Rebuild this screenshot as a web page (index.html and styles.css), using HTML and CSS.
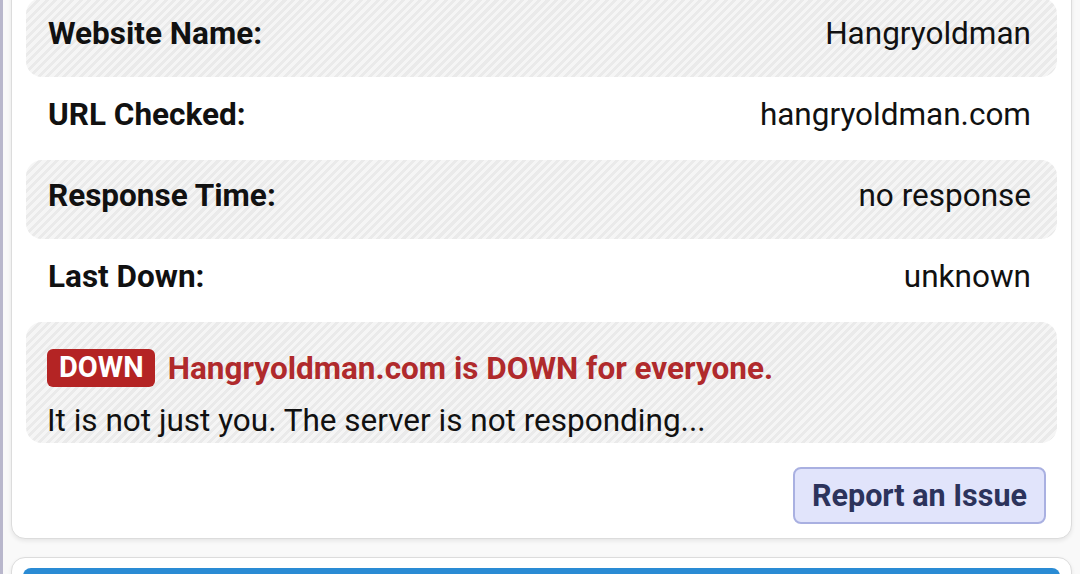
FILE: index.html
```html
<!DOCTYPE html>
<html lang="en">
<head>
<meta charset="utf-8">
<title>Hangryoldman status</title>
<link rel="stylesheet" href="styles.css">
</head>
<body>
<div class="page">
  <section class="card">
    <div class="row striped">
      <span class="label">Website Name:</span>
      <span class="value">Hangryoldman</span>
    </div>
    <div class="row">
      <span class="label">URL Checked:</span>
      <span class="value">hangryoldman.com</span>
    </div>
    <div class="row striped">
      <span class="label">Response Time:</span>
      <span class="value">no response</span>
    </div>
    <div class="row">
      <span class="label">Last Down:</span>
      <span class="value">unknown</span>
    </div>
    <div class="status striped">
      <div class="headline"><span class="badge">DOWN</span><span class="headtext">Hangryoldman.com is DOWN for everyone.</span></div>
      <p class="detail">It is not just you. The server is not responding...</p>
    </div>
    <div class="actions">
      <button class="report">Report an Issue</button>
    </div>
  </section>
  <section class="card next">
    <div class="bluebar"></div>
  </section>
</div>
</body>
</html>
```
FILE: styles.css
```css
html, body {
  margin: 0;
  padding: 0;
  height: 100%;
  overflow: hidden;
}
body {
  background: #f9f9f9;
  font-family: Roboto, "Liberation Sans", sans-serif;
  color: #111;
  border-left: 3px solid #b9b7cc;
}
.page {
  padding: 0 8px 0 8px;
  margin-top: -17px;
  display: flex;
  flex-direction: column;
  gap: 18px;
}
.card {
  background: #fff;
  border: 1px solid #dcdcdc;
  border-radius: 14px;
  box-shadow: 0 2px 4px rgba(0,0,0,0.08);
  padding: 14px 14px 14px 14px;
  display: flex;
  flex-direction: column;
}
.striped {
  background: repeating-linear-gradient(135deg, #f5f5f5 0 3px, #eaeaea 3px 6px);
  border-radius: 16px;
}
.row {
  height: 79px;
  margin-bottom: 2px;
  display: flex;
  align-items: center;
  justify-content: space-between;
  padding: 0 26px 9px 22px;
  box-sizing: border-box;
  font-size: 31.5px;
}
.label {
  font-weight: 700;
}
.value {
  font-weight: 400;
}
.status {
  margin-top: 0;
  height: 121px;
  box-sizing: border-box;
  padding: 27px 22px 0 21px;
}
.headline {
  display: flex;
  align-items: center;
  gap: 13px;
}
.badge {
  background: #b42424;
  color: #fff;
  font-weight: 700;
  font-size: 29px;
  border-radius: 6px;
  padding: 2px 11px 3px 12px;
  line-height: 33px;
}
.headtext {
  color: #b02a2c;
  font-weight: 700;
  font-size: 31.5px;
}
.detail {
  margin: 16px 0 0 0;
  font-size: 31.5px;
  line-height: 36px;
}
.actions {
  display: flex;
  justify-content: flex-end;
  padding: 24px 11px 0 0;
}
.report {
  font-family: Roboto, "Liberation Sans", sans-serif;
  font-size: 30.5px;
  font-weight: 700;
  color: #2c335c;
  background: #e1e4fb;
  border: 2px solid #a9b0e1;
  border-radius: 8px;
  height: 57px;
  padding: 0 17px;
}
.next {
  height: 60px;
  padding: 10px 11px 0 11px;
}
.bluebar {
  height: 40px;
  background: #2a8bd4;
  border-radius: 8px 8px 0 0;
}
```
